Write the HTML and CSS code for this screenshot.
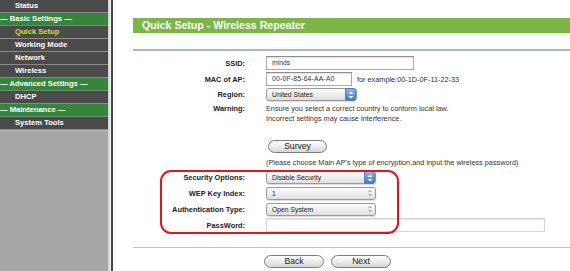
FILE: index.html
```html
<!DOCTYPE html>
<html>
<head>
<meta charset="utf-8">
<link rel="stylesheet" href="styles.css">
</head>
<body>
<div class="page">
  <nav class="side">
    <div class="item">Status</div>
    <div class="head">— Basic Settings —</div>
    <div class="item active">Quick Setup</div>
    <div class="item">Working Mode</div>
    <div class="item">Network</div>
    <div class="item">Wireless</div>
    <div class="head">— Advanced Settings —</div>
    <div class="item">DHCP</div>
    <div class="head">— Maintenance —</div>
    <div class="item">System Tools</div>
    <div class="fill"></div>
  </nav>
  <div class="sep"></div>
  <main class="main">
    <div class="title">Quick Setup - Wireless Repeater</div>
    <div class="rule top"></div>
    <div class="form">
      <div class="row r16">
        <div class="lbl">SSID:</div>
        <div class="val"><div class="input ssid">minds</div></div>
      </div>
      <div class="row r16">
        <div class="lbl">MAC of AP:</div>
        <div class="val"><div class="input mac">00-0F-85-64-AA-A0</div><span class="hint">for example:00-1D-0F-11-22-33</span></div>
      </div>
      <div class="row r15">
        <div class="lbl">Region:</div>
        <div class="val"><div class="select region">United States<span class="arrow blue"><svg width="6" height="8" viewBox="0 0 6 8"><path d="M3 0.5 L5.5 3 H0.5Z M3 7.5 L5.5 5 H0.5Z" fill="#fff"/></svg></span></div></div>
      </div>
      <div class="row warnrow">
        <div class="lbl top">Warning:</div>
        <div class="val text">Ensure you select a correct country to conform local law.<br>Incorrect settings may cause interference.</div>
      </div>
      <div class="row surveyrow">
        <div class="lbl"></div>
        <div class="val"><div class="btn survey-btn">Survey</div></div>
      </div>
      <div class="row noterow">
        <div class="lbl"></div>
        <div class="val text">(Please choose Main AP's type of encryption,and input the wireless password)</div>
      </div>
      <div class="row r15">
        <div class="lbl">Security Options:</div>
        <div class="val"><div class="select sec">Disable Security<span class="arrow blue"><svg width="6" height="8" viewBox="0 0 6 8"><path d="M3 0.5 L5.5 3 H0.5Z M3 7.5 L5.5 5 H0.5Z" fill="#fff"/></svg></span></div></div>
      </div>
      <div class="row r16">
        <div class="lbl">WEP Key Index:</div>
        <div class="val"><div class="select sec">1<span class="arrow"><svg width="6" height="8" viewBox="0 0 6 8"><path d="M3 1 L5 3 H1Z M3 7 L5 5 H1Z" fill="#aaa"/></svg></span></div></div>
      </div>
      <div class="row r16">
        <div class="lbl">Authentication Type:</div>
        <div class="val"><div class="select sec">Open System<span class="arrow"><svg width="6" height="8" viewBox="0 0 6 8"><path d="M3 1 L5 3 H1Z M3 7 L5 5 H1Z" fill="#aaa"/></svg></span></div></div>
      </div>
      <div class="row r16">
        <div class="lbl">PassWord:</div>
        <div class="val"><div class="input pass"></div></div>
      </div>
      <div class="redbox"></div>
    </div>
    <div class="rule bottom"></div>
    <div class="actions">
      <div class="btn nav-btn">Back</div>
      <div class="btn nav-btn">Next</div>
    </div>
  </main>
</div>
</body>
</html>
```

FILE: styles.css
```css
* { box-sizing: border-box; }
html, body { margin: 0; padding: 0; background: #fff; }
body { font-family: "Liberation Sans", Arial, sans-serif; width: 570px; height: 271px; overflow: hidden; }

.page { display: flex; height: 271px; }

.side { width: 108px; display: flex; flex-direction: column; background: #a7a7a7; }
.side .item, .side .head {
  height: 13px; line-height: 12px; font-size: 7.6px; font-weight: bold; color: #fff;
  border-bottom: 1px solid #8a8a8a; white-space: nowrap;
}
.side .item { background: #4a4a4a; padding-left: 15px; }
.side .item.active { color: #cde03a; }
.side .head { background: #36853c; padding-left: 0; border-bottom-color: #6d8f6d; }
.side .fill { flex: 1; background: #a7a7a7; border-top: 1px solid #b5b5b5; }

.sep { width: 5px; border-left: 2px solid #d9d9d9; border-right: 2px solid #454545; background: #f2f2f2; }

.main { flex: 1; padding: 18px 0 0 20px; }

.title {
  height: 15px; background: #7ab747; color: #fff; font-weight: bold; font-size: 10.6px;
  line-height: 15px; padding-left: 9px;
}

.rule { height: 2px; background: #a3c1a3; }
.rule.top { margin-top: 16px; }
.rule.bottom { margin-top: 14px; background: #b3cdb0; height: 1px; }

.form { position: relative; margin-top: 4px; display: flex; flex-direction: column; }
.row { display: grid; grid-template-columns: 112px 1fr; column-gap: 21px; }
.r16 { height: 16px; }
.r15 { height: 15px; }
.warnrow { height: 20px; padding-top: 2px; }
.surveyrow { height: 13px; margin-top: 18px; }
.noterow { height: 12px; margin-top: 4px; margin-bottom: 1px; }

.lbl { font-size: 7.4px; font-weight: bold; color: #222; display: flex; align-items: center; justify-content: flex-end; white-space: nowrap; }
.lbl.top { align-items: flex-start; line-height: 9.5px; }
.val { display: flex; align-items: center; font-size: 7.3px; color: #333; white-space: nowrap; }
.text { line-height: 9.5px; display: block; }
.noterow .text { line-height: 12px; }

.input {
  height: 14px; border: 1px solid #a9a9a9; border-top-color: #8e8e8e; background: #fff;
  font-size: 6.8px; color: #333; line-height: 12px; padding-left: 5px; box-shadow: inset 0 1px 1px rgba(0,0,0,0.12);
}
.ssid { width: 148px; }
.mac { width: 86px; letter-spacing: 0.2px; }
.pass { width: 279px; border-color: #d4d4d4; }
.hint { margin-left: 5px; font-size: 7.3px; color: #333; }

.select {
  position: relative; height: 13px; border: 1px solid #9a9a9a; border-radius: 3px;
  background: linear-gradient(#fdfdfd, #dedede); font-size: 6.8px; color: #222;
  line-height: 11px; padding-left: 5px; box-shadow: 0 1px 1px rgba(0,0,0,0.15);
}
.region { width: 91px; }
.sec { width: 110px; }
.select .arrow {
  position: absolute; right: 0; top: -1px; bottom: -1px; width: 11px; border-radius: 0 3px 3px 0;
  display: flex; align-items: center; justify-content: center;
}
.select .arrow.blue { background: linear-gradient(#8fb6ec, #3c78d8); border: 1px solid #5a7fb8; }

.btn {
  height: 13px; border: 1px solid #7d7d7d; border-radius: 7px;
  background: linear-gradient(#ffffff, #e8e8e8 60%, #d6d6d6);
  font-size: 8.6px; color: #222; text-align: center; line-height: 11px;
}
.survey-btn { width: 59px; margin-left: 2px; }

.actions { display: flex; gap: 7px; margin-top: 7px; padding-left: 131px; }
.nav-btn { width: 60px; }

.redbox {
  position: absolute; left: 27px; top: 115px; width: 239px; height: 64px;
  border: 2px solid #e3161f; border-radius: 11px; pointer-events: none;
}
```
